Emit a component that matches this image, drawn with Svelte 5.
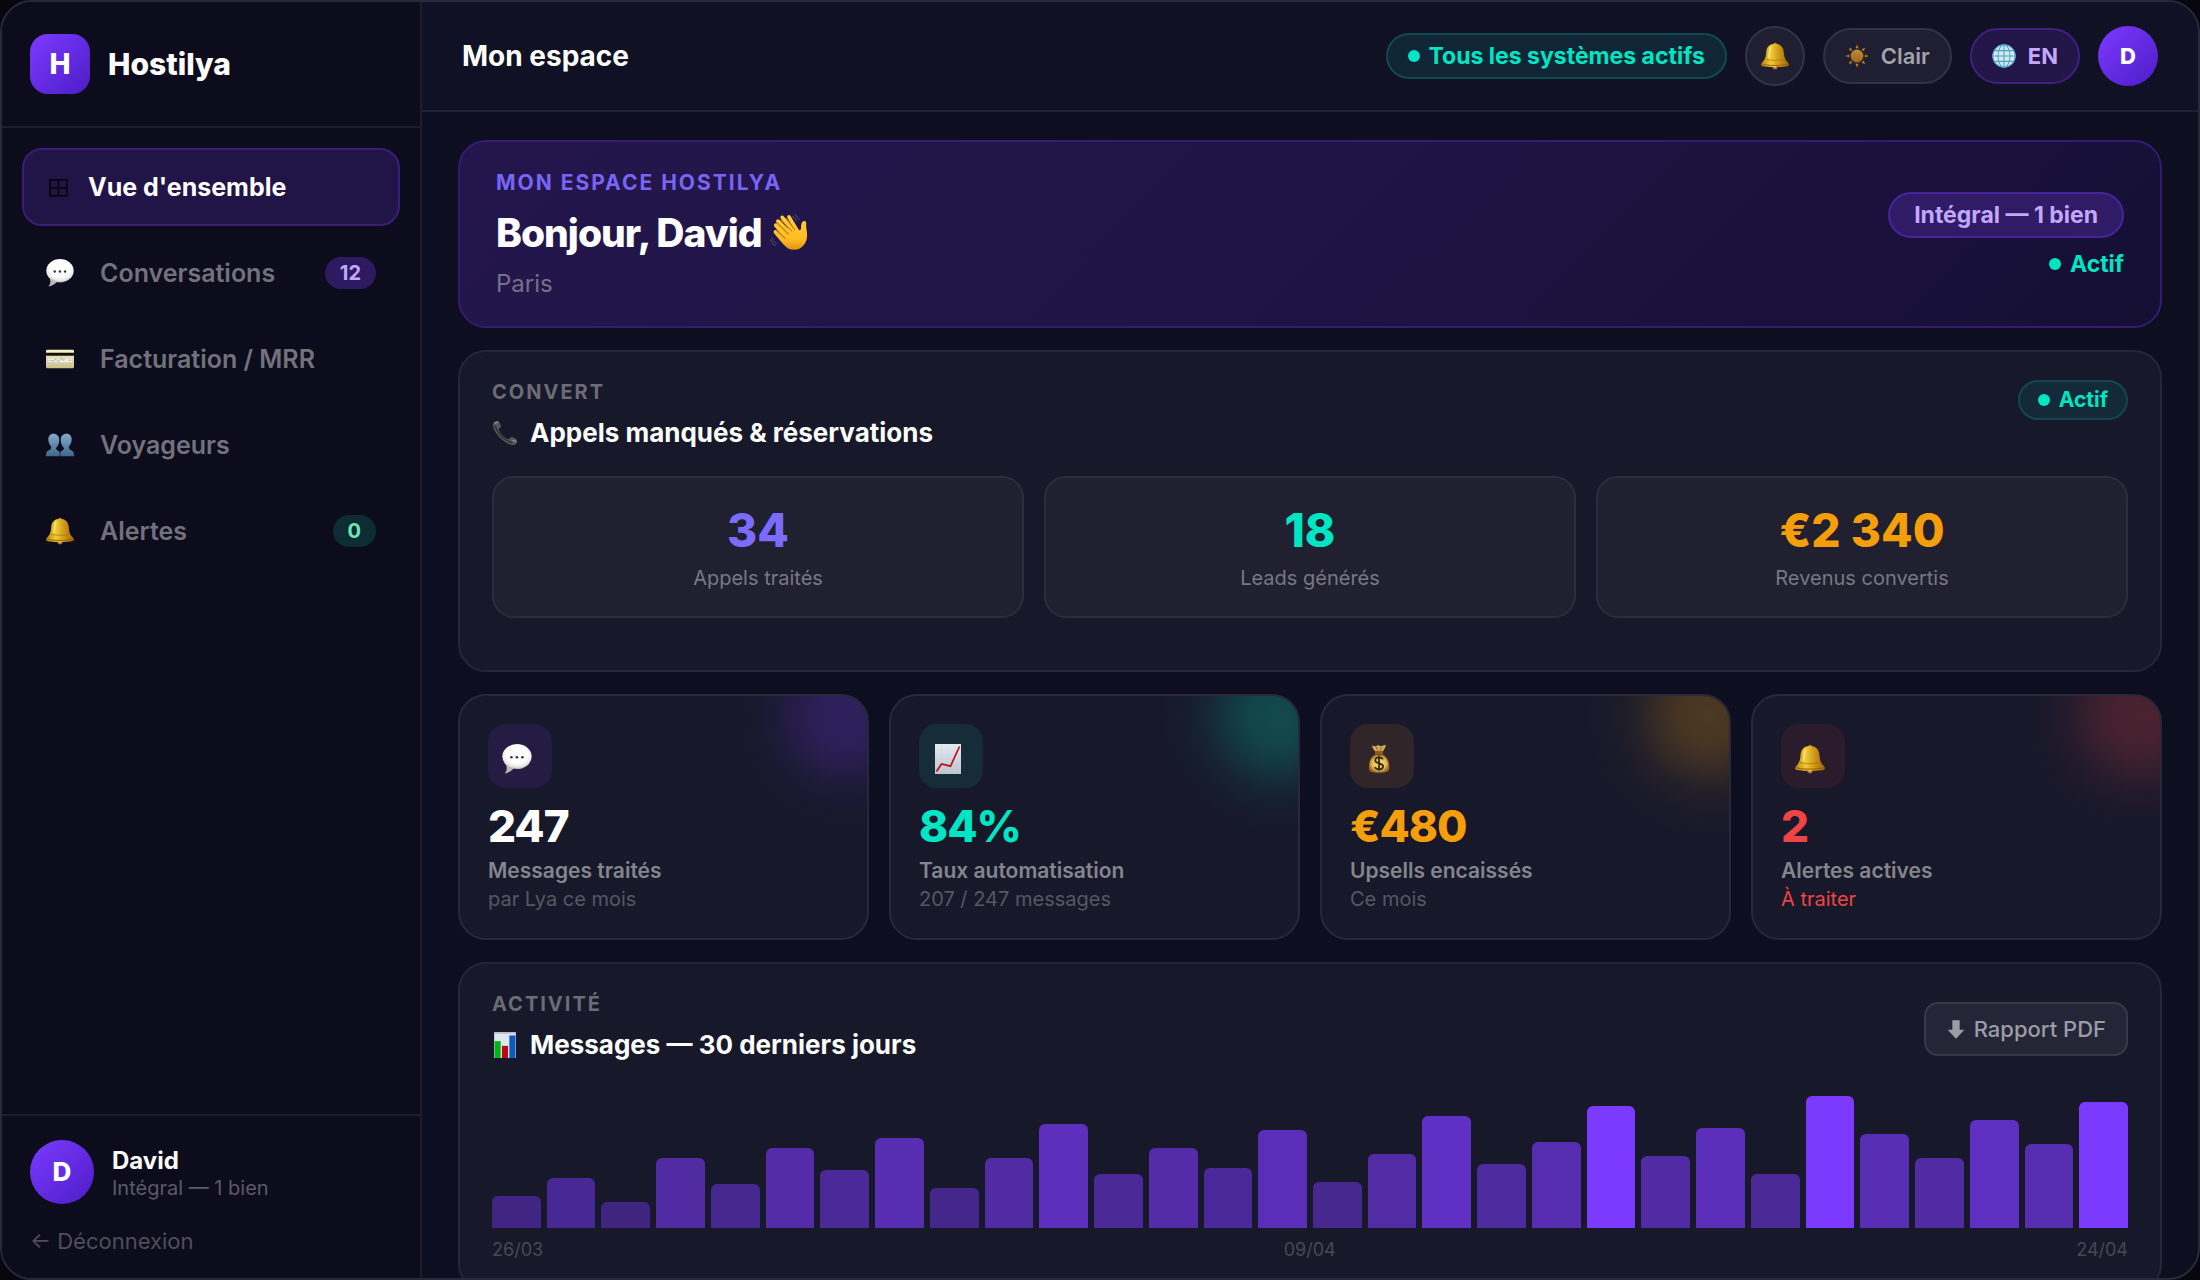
<script lang="ts">
  type Tone = 'violet' | 'mint' | 'amber' | 'red' | 'plain';

  interface NavItem {
    id: string;
    label: string;
    icon: string;
    badge?: string;
    badgeTone?: Tone;
  }

  const nav: NavItem[] = [
    { id: 'overview', label: "Vue d'ensemble", icon: 'grid' },
    { id: 'conversations', label: 'Conversations', icon: 'bubble', badge: '12', badgeTone: 'violet' },
    { id: 'billing', label: 'Facturation / MRR', icon: 'card' },
    { id: 'guests', label: 'Voyageurs', icon: 'people' },
    { id: 'alerts', label: 'Alertes', icon: 'bell', badge: '0', badgeTone: 'mint' },
  ];

  const convert: { value: string; label: string; tone: Tone }[] = [
    { value: '34', label: 'Appels traités', tone: 'violet' },
    { value: '18', label: 'Leads générés', tone: 'mint' },
    { value: '€2 340', label: 'Revenus convertis', tone: 'amber' },
  ];

  const kpis: { icon: string; value: string; label: string; sub: string; tone: Tone }[] = [
    { icon: 'bubble', value: '247', label: 'Messages traités', sub: 'par Lya ce mois', tone: 'violet' },
    { icon: 'trend', value: '84%', label: 'Taux automatisation', sub: '207 / 247 messages', tone: 'mint' },
    { icon: 'money', value: '€480', label: 'Upsells encaissés', sub: 'Ce mois', tone: 'amber' },
    { icon: 'bell', value: '2', label: 'Alertes actives', sub: 'À traiter', tone: 'red' },
  ];

  // Messages per day, 26/03 to 24/04
  const days = [
    32, 50, 26, 70, 44, 80, 58, 90, 40, 70, 104, 54, 80, 60, 98, 46, 74, 112, 64, 86, 122, 72, 100,
    54, 132, 94, 70, 108, 84, 126,
  ];
  const chartMax = 140;
  const peakFrom = 120;

  function barOpacity(n: number) {
    return n >= peakFrom ? 1 : 0.3 + (n / 132) * 0.5;
  }

  let current = $state('overview');
</script>

{#snippet icon(name: string, size: number)}
  <svg class="icon" width={size} height={size} viewBox="0 0 30 30" aria-hidden="true">
    {#if name === 'grid'}
      <path d="M5 6h21v20H5zM15.500 6v20M5 16h21" fill="none" stroke="#000" stroke-width="1.800" />
    {:else if name === 'bubble'}
      <path d="M4 21 C5.500 24.500 4.500 27.500 2.800 29 C3.500 30 9 27.500 12 24.300z" fill="#b9b9b9" />
      <ellipse cx="15" cy="12.600" rx="14.700" ry="12.500" fill="url(#g-bubble)" />
      <circle cx="9.400" cy="13.300" r="1.300" fill="#333" />
      <circle cx="14.900" cy="13.300" r="1.300" fill="#333" />
      <circle cx="20.400" cy="13.300" r="1.300" fill="#333" />
    {:else if name === 'card'}
      <rect x="0" y="5" width="30" height="20" rx="1.500" fill="url(#g-card)" />
      <rect x="0" y="8.300" width="30" height="3.200" fill="#15120c" />
      <rect x="2" y="14.500" width="26" height="4" fill="#efeee0" />
      <path d="M3 17q1.500-1.500 3 0t3-.7t3 .4t3-.8t3 .4l2-.6M24 16.300h3" fill="none" stroke="#8aa3c8" stroke-width="0.800" />
    {:else if name === 'people'}
      <g fill="url(#g-people)">
        <path d="M8 3c-3.700 0-5.700 2.800-5.500 6.500.2 3.500 1.500 5.500 3 7.200.4 2-.5 3.300-2.500 4C1 21.500 0 23 0 27h14.600v-4.500c-1.600-1.400-4-2-4-4.200 2.300-2 3.600-5 3.600-8.600C14.200 5.500 11.700 3 8 3z" />
        <path d="M22 3c3.700 0 5.700 2.800 5.500 6.500-.2 3.500-1.500 5.500-3 7.200-.4 2 .5 3.300 2.500 4 2 .8 3 2.300 3 6.300H15.400v-4.500c1.600-1.400 4-2 4-4.200-2.300-2-3.600-5-3.600-8.600C15.800 5.500 18.300 3 22 3z" />
      </g>
    {:else if name === 'bell'}
      <circle cx="15" cy="2.300" r="1.600" fill="#c58a0c" />
      <circle cx="15" cy="26.400" r="2.800" fill="#b8730d" />
      <path d="M15 2C9.500 2 6 5.300 5.600 10.500 5.200 16 4.600 18.500 1.200 22c-2 2.200-1.300 3.400.8 3.900 4.500 1.100 21.500 1.100 26 0 2.100-.5 2.800-1.700.8-3.900-3.400-3.500-4-6-4.400-11.500C24 5.300 20.500 2 15 2z" fill="url(#g-bell)" />
      <path d="M1 23.600c5 2.100 23 2.100 28 0" fill="none" stroke="#8f5c06" stroke-width="1" />
      <path d="M5 18.500c5 1.600 15 1.600 20 0" fill="none" stroke="#a8730a" stroke-width="0.700" />
      <path d="M10.500 6c-1.800 2.500-1.400 7-2 10.500" fill="none" stroke="#fff3a0" stroke-width="2" stroke-linecap="round" opacity="0.600" />
      <circle cx="15" cy="26.600" r="1.200" fill="#f3b763" />
    {:else if name === 'trend'}
      <rect x="2" y="0" width="26" height="30" fill="url(#g-paper)" />
      <path d="M2 6h26M2 12h26M2 18h26M2 24h26M8.500 0v30M15 0v30M21.500 0v30" stroke="#c8d2db" stroke-width="0.300" />
      <path d="M3.500 27.500 8.500 20l9 2.200L26.500 2.500" fill="none" stroke="#c40d12" stroke-width="1.700" />
    {:else if name === 'money'}
      <path d="M11 10.500C6 14 4.700 19 5 24c.2 4 3 4.700 10 4.700S25 28 25.200 24c.3-5-1-10-6.200-13.500z" fill="url(#g-bag)" />
      <path d="M8 1.500l3.500 1L14 1l2.500 1.300L21.500.8c.8 2.200-1.500 4.500-2.500 6.700h-8C10 5.500 8.200 4 8 1.500z" fill="#d6a856" />
      <path d="M11 7.500h8v2.700h-8z" fill="#8c5a1b" />
      <path d="M12.500 2.800l1 4M17.500 2.800l-1 4" stroke="#8c5a1b" stroke-width="0.800" />
      <path d="M19 15.300c-1-1.500-2.300-1.900-4-1.900-2.300 0-3.800 1.200-3.800 2.900 0 4.100 7.900 1.900 7.900 6 0 1.800-1.600 3-4.100 3-2 0-3.400-.7-4.200-2.200M15 11.600v15.200" fill="none" stroke="#33291a" stroke-width="1.800" />
    {:else if name === 'sun'}
      <circle cx="15" cy="15" r="8" fill="url(#g-sun)" />
      <g fill="#b87a25">
        {#each [0, 45, 90, 135, 180, 225, 270, 315] as a}
          <path d="M13 5.200L15 .5l2 4.700z" transform="rotate({a} 15 15)" />
        {/each}
      </g>
    {:else if name === 'globe'}
      <circle cx="15" cy="15" r="14.300" fill="#d6e7ee" />
      <g fill="none" stroke="#4aa4c8" stroke-width="1.300">
        <circle cx="15" cy="15" r="14" />
        <ellipse cx="15" cy="15" rx="7.500" ry="14" />
        <path d="M15 1v28M1 15h28M3 8.300h24M3 21.700h24" />
      </g>
    {:else if name === 'wave'}
      <path d="M5.200 6.800C4 5.200 6 3.200 7.500 4.600l7.200 7.600-6.200-8.600C7.300 1.900 9.600.2 11 1.900l7.300 9-4.500-8C12.900 1.200 15.200 0 16.300 1.700l6.200 10.400c.8 1.300 2 .6 2-.8-.1-2.500.2-4.800 1.800-5.500 1.400-.6 2.500.4 2.300 2-.3 2.700.6 5.200.7 8.700.2 6.500-4.500 11.700-10 11.800-3.700.1-6.300-1.700-8.800-4.500L3.300 15.300c-1.400-1.600.7-3.500 2.200-2.100l5.300 5.300L3.600 10c-1.300-1.600.3-3.500 1.900-2.500z" fill="url(#g-hand)" />
      <path d="M5.800 7.300l8.700 8.500M8.900 4.900l8.300 8.600M12.700 3.500l6.700 8.600M5.200 13l6.800 6.500" fill="none" stroke="#c9810d" stroke-width="0.900" stroke-linecap="round" />
      <path d="M19.500.6c1.800.8 3 2.200 3.600 4M17.600 1.800c1.800.9 2.700 2 3.300 3.600M1.600 18.500c.5 2 1.700 3.700 3.500 4.700M.3 20.200c.7 2.200 2 3.800 4 4.900" fill="none" stroke="#4b4766" stroke-width="0.800" stroke-linecap="round" />
    {:else if name === 'phone'}
      <path d="M1.500 3.500C3 .8 6.500-.2 8 2l2.200 4c1 2-1.300 3.300-2.500 4.300C9 15.500 14.500 21 19.600 22.400c1-1.200 2.500-3.400 4.400-2.400l4 2.300c2.200 1.500 1 4.900-1.500 6.300C17.500 31.500-1.800 13 1.500 3.500z" fill="#55565a" />
      <path d="M3.500 6.500C5.500 14.500 14.500 24 23.500 26.500" fill="none" stroke="#2b2c30" stroke-width="1.500" />
      <path d="M3.600 3.700l3-1.200M24 23.500l3 1.200" stroke="#8a8b8e" stroke-width="1.500" stroke-linecap="round" />
    {:else if name === 'bars'}
      <rect x="2.500" y="0" width="25" height="30" fill="#dfe7ee" />
      <path d="M2.500 1h25" stroke="#b4a9c4" stroke-width="1.500" />
      <rect x="3" y="10.500" width="7" height="19.500" fill="#00b418" />
      <rect x="11.500" y="16" width="7" height="14" fill="#c00613" />
      <rect x="20" y="4" width="7" height="26" fill="#0b5bbd" />
    {:else if name === 'down'}
      <path d="M9.500 2h11v14h7L15 29.500 2.500 16h7z" fill="currentColor" />
    {/if}
  </svg>
{/snippet}

<!-- shared gradients for the icons -->
<svg class="defs" width="0" height="0" aria-hidden="true">
  <defs>
    <radialGradient id="g-bubble" cx="0.5" cy="0.4" r="0.6">
      <stop offset="0.6" stop-color="#fff" />
      <stop offset="0.88" stop-color="#e4e4e4" />
      <stop offset="1" stop-color="#ababab" />
    </radialGradient>
    <linearGradient id="g-card" x2="0" y2="1">
      <stop offset="0" stop-color="#f7f3cd" />
      <stop offset="1" stop-color="#c9c08b" />
    </linearGradient>
    <linearGradient id="g-people" x2="0" y2="1">
      <stop offset="0" stop-color="#84a9c8" />
      <stop offset="1" stop-color="#3f6890" />
    </linearGradient>
    <linearGradient id="g-bell">
      <stop offset="0" stop-color="#b9800c" />
      <stop offset="0.35" stop-color="#f0cc34" />
      <stop offset="0.65" stop-color="#cf971a" />
      <stop offset="1" stop-color="#a06405" />
    </linearGradient>
    <linearGradient id="g-paper" x2="0" y2="1">
      <stop offset="0" stop-color="#e2ebf3" />
      <stop offset="1" stop-color="#bcc5cd" />
    </linearGradient>
    <radialGradient id="g-bag">
      <stop offset="0" stop-color="#f6dc7c" />
      <stop offset="0.7" stop-color="#e5bd50" />
      <stop offset="1" stop-color="#9c6a20" />
    </radialGradient>
    <linearGradient id="g-sun" x2="0" y2="1">
      <stop offset="0" stop-color="#b98c35" />
      <stop offset="1" stop-color="#a5651a" />
    </linearGradient>
    <linearGradient id="g-hand" x2="0" y2="1">
      <stop offset="0" stop-color="#ffcf3f" />
      <stop offset="0.7" stop-color="#fdbb22" />
      <stop offset="1" stop-color="#e2930c" />
    </linearGradient>
  </defs>
</svg>

<div class="shell">
  <aside class="sidebar">
    <div class="brand">
      <span class="brand__mark">H</span>
      <span class="brand__name">Hostilya</span>
    </div>

    <nav class="nav" aria-label="Navigation">
      {#each nav as item (item.id)}
        <a
          class="nav__item"
          class:nav__item--active={current === item.id}
          href="#{item.id}"
          aria-current={current === item.id ? 'page' : undefined}
          onclick={() => (current = item.id)}
        >
          <span class="nav__icon" class:nav__icon--glyph={item.icon === 'grid'}>
            {@render icon(item.icon, item.icon === 'grid' ? 24 : 28)}
          </span>
          <span class="nav__label">{item.label}</span>
          {#if item.badge}
            <span class="nav__badge nav__badge--{item.badgeTone}">{item.badge}</span>
          {/if}
        </a>
      {/each}
    </nav>

    <div class="account">
      <div class="account__row">
        <span class="avatar avatar--lg">D</span>
        <div class="account__text">
          <div class="account__name">David</div>
          <div class="account__plan">Intégral — 1 bien</div>
        </div>
      </div>
      <button type="button" class="logout">← Déconnexion</button>
    </div>
  </aside>

  <div class="main">
    <header class="topbar">
      <h1>Mon espace</h1>
      <div class="topbar__tools">
        <span class="status"><i class="dot"></i>Tous les systèmes actifs</span>
        <button type="button" class="round" aria-label="Notifications">{@render icon('bell', 28)}</button>
        <button type="button" class="chip">{@render icon('sun', 24)}Clair</button>
        <button type="button" class="chip chip--violet">{@render icon('globe', 24)}EN</button>
        <span class="avatar">D</span>
      </div>
    </header>

    <main class="content">
      <section class="hero">
        <div>
          <p class="hero__eyebrow">MON ESPACE HOSTILYA</p>
          <h2 class="hero__title">Bonjour, David {@render icon('wave', 38)}</h2>
          <p class="hero__city">Paris</p>
        </div>
        <div class="hero__side">
          <span class="plan">Intégral — 1 bien</span>
          <span class="live"><i class="dot"></i>Actif</span>
        </div>
      </section>

      <section class="card">
        <div class="card__head card__head--top">
          <div>
            <p class="eyebrow">CONVERT</p>
            <h3 class="card__title">{@render icon('phone', 26)}Appels manqués &amp; réservations</h3>
          </div>
          <span class="tag"><i class="dot"></i>Actif</span>
        </div>
        <div class="tiles">
          {#each convert as t}
            <div class="tile">
              <div class="tile__value tone--{t.tone}">{t.value}</div>
              <div class="tile__label">{t.label}</div>
            </div>
          {/each}
        </div>
      </section>

      <section class="kpis">
        {#each kpis as k}
          <article class="kpi kpi--{k.tone}">
            <span class="kpi__icon">{@render icon(k.icon, 30)}</span>
            <div class="kpi__value">{k.value}</div>
            <div class="kpi__label">{k.label}</div>
            <div class="kpi__sub">{k.sub}</div>
          </article>
        {/each}
      </section>

      <section class="card card--activity">
        <div class="card__head">
          <div>
            <p class="eyebrow">ACTIVITÉ</p>
            <h3 class="card__title">{@render icon('bars', 26)}Messages — 30 derniers jours</h3>
          </div>
          <button type="button" class="report">{@render icon('down', 20)}Rapport PDF</button>
        </div>
        <div class="chart">
          {#each days as n}
            <div class="chart__bar" style="height: {(n / chartMax) * 100}%; opacity: {barOpacity(n)}"></div>
          {/each}
        </div>
        <div class="chart__axis">
          <span>26/03</span>
          <span>09/04</span>
          <span>24/04</span>
        </div>
      </section>
    </main>
  </div>
</div>

<style>
  :global(body) {
    background: #07070d;
  }

  .shell {
    --violet: #7c3aff;
    --violet-soft: #c4a8ff;
    --mint: #00e5c3;
    --amber: #f59e0b;
    --red: #ef4444;
    display: flex;
    box-sizing: border-box;
    height: 100vh;
    overflow: hidden;
    border: 2px solid #2a2939;
    border-radius: 32px;
    background: #0d0e20;
    color: #fff;
    font-family: Inter, 'Liberation Sans', sans-serif;
    font-size: 22px;
    line-height: 26px;
  }

  .shell :is(h1, h2, h3, p) {
    margin: 0;
  }

  .shell :is(button, a) {
    font: inherit;
    color: inherit;
    text-decoration: none;
    cursor: pointer;
  }

  .shell :is(div, span, button, a, section, aside, header, article) {
    box-sizing: border-box;
  }

  .defs {
    position: absolute;
  }

  .icon {
    display: block;
    flex: none;
  }

  .dot {
    flex: none;
    width: 12px;
    height: 12px;
    border-radius: 50%;
    background: var(--mint);
  }

  /* sidebar */
  .sidebar {
    display: flex;
    flex: none;
    flex-direction: column;
    width: 420px;
    border-right: 2px solid #1e1d2e;
    background: #0d0c1d;
  }

  .brand {
    display: flex;
    align-items: center;
    gap: 18px;
    padding: 32px 28px;
    border-bottom: 2px solid #1e1d2e;
  }

  .brand__mark {
    display: grid;
    place-items: center;
    width: 60px;
    height: 60px;
    border-radius: 18px;
    background: linear-gradient(135deg, #7c3aff, #4c1dc7);
    font-size: 28px;
    font-weight: 800;
  }

  .brand__name {
    font-size: 30px;
    font-weight: 800;
    line-height: 36px;
  }

  .nav {
    display: flex;
    flex: 1;
    flex-direction: column;
    gap: 8px;
    padding: 20px;
  }

  .nav__item {
    display: flex;
    align-items: center;
    gap: 20px;
    height: 78px;
    padding: 0 22px;
    border: 2px solid transparent;
    border-radius: 20px;
  }

  .nav__item--active {
    border-color: #3b1d78;
    background: #211446;
  }

  .nav__icon {
    width: 34px;
  }

  .nav__icon--glyph {
    width: 22px;
  }

  .nav__label {
    flex: 1;
    color: #73727c;
    font-size: 25px;
    font-weight: 600;
    line-height: 28px;
  }

  .nav__item--active .nav__label {
    color: #fff;
    font-weight: 700;
  }

  .nav__badge {
    padding: 3px 15px;
    border-radius: 16px;
    font-size: 20px;
    font-weight: 700;
  }

  .nav__badge--violet {
    background: #2e1a61;
    color: var(--violet-soft);
  }

  .nav__badge--mint {
    background: #0d2c33;
    color: #6ee7b7;
  }

  .account {
    padding: 24px 28px;
    border-top: 2px solid #1e1d2e;
  }

  .account__row {
    display: flex;
    align-items: center;
    gap: 18px;
  }

  .account__text {
    padding-top: 4px;
  }

  .account__name {
    font-size: 24px;
    font-weight: 700;
    line-height: 28px;
  }

  .account__plan {
    color: #5b5a66;
    font-size: 20px;
  }

  .logout {
    margin-top: 24px;
    padding: 0;
    border: 0;
    background: none;
    color: #4f4e5a !important;
  }

  .avatar {
    display: grid;
    flex: none;
    place-items: center;
    width: 60px;
    height: 60px;
    border-radius: 50%;
    background: linear-gradient(135deg, #7c3aff, #4c1dc7);
    font-weight: 800;
  }

  .avatar--lg {
    width: 64px;
    height: 64px;
    font-size: 26px;
  }

  /* topbar */
  .main {
    display: flex;
    flex: 1;
    flex-direction: column;
    min-width: 0;
  }

  .topbar {
    display: flex;
    flex: none;
    align-items: center;
    justify-content: space-between;
    height: 110px;
    padding: 0 40px;
    border-bottom: 2px solid #1f2031;
    background: #101124;
  }

  h1 {
    font-size: 28px;
    font-weight: 700;
    line-height: 34px;
  }

  .topbar__tools {
    display: flex;
    align-items: center;
    gap: 18px;
  }

  .status {
    display: flex;
    align-items: center;
    gap: 9px;
    padding: 8px 20px;
    border: 2px solid #104a50;
    border-radius: 24px;
    background: #102535;
    color: var(--mint);
    font-size: 23px;
    font-weight: 700;
  }

  .round {
    display: grid;
    place-items: center;
    width: 60px;
    height: 60px;
    padding: 0;
    border: 2px solid #343344;
    border-radius: 50%;
    background: #1f1f31;
  }

  .chip {
    display: flex;
    align-items: center;
    gap: 12px;
    height: 56px;
    padding: 0 20px;
    border: 2px solid #343344;
    border-radius: 28px;
    background: #1f1f31;
    color: #a3a3ab !important;
    font-weight: 600 !important;
  }

  .chip--violet {
    border-color: #3f2080;
    background: #221547;
    color: var(--violet-soft) !important;
    font-weight: 700 !important;
  }

  /* content */
  .content {
    display: flex;
    flex: 1;
    flex-direction: column;
    gap: 22px;
    min-height: 0;
    padding: 28px 36px;
    overflow-y: auto;
    scrollbar-width: none;
  }

  .content > section {
    flex: none;
  }

  .hero {
    display: flex;
    align-items: center;
    justify-content: space-between;
    padding: 28px 36px;
    border: 2px solid #351c72;
    border-radius: 28px;
    background: linear-gradient(135deg, #24164d, #1f1444 50%, #150f34);
  }

  .hero__eyebrow {
    color: #7864f5;
    font-size: 21px;
    font-weight: 700;
    letter-spacing: 2px;
  }

  .hero__title {
    display: flex;
    align-items: center;
    gap: 8px;
    margin: 14px 0 !important;
    font-size: 39px;
    font-weight: 800;
    line-height: 46px;
    letter-spacing: -1px;
  }

  .hero__city {
    color: #767089;
    font-size: 24px;
    line-height: 28px;
  }

  .hero__side {
    display: flex;
    flex-direction: column;
    align-items: flex-end;
    gap: 14px;
  }

  .plan {
    padding: 8px 24px;
    border: 2px solid #48239b;
    border-radius: 24px;
    background: #301b66;
    color: var(--violet-soft);
    font-size: 23px;
    font-weight: 700;
  }

  .live,
  .tag {
    display: flex;
    align-items: center;
    gap: 9px;
    color: var(--mint);
    font-size: 23px;
    font-weight: 700;
    line-height: 24px;
  }

  .tag {
    padding: 6px 18px;
    border: 2px solid #13474e;
    border-radius: 20px;
    background: #152a38;
    font-size: 21px;
  }

  .card {
    padding: 28px 32px 52px;
    border: 2px solid #262637;
    border-radius: 28px;
    background: #17182a;
  }

  .card--activity {
    padding-bottom: 28px;
  }

  .card__head {
    display: flex;
    align-items: center;
    justify-content: space-between;
    margin-bottom: 22px;
  }

  .card__head--top {
    align-items: flex-start;
  }

  .eyebrow {
    color: #6c6b76;
    font-size: 20px;
    font-weight: 700;
    line-height: 24px;
    letter-spacing: 2px;
  }

  .card__title {
    display: flex;
    align-items: center;
    gap: 12px;
    margin-top: 8px !important;
    font-size: 26px;
    font-weight: 700;
    line-height: 42px;
  }

  .tiles {
    display: grid;
    grid-template-columns: repeat(3, 1fr);
    gap: 20px;
  }

  .tile {
    padding: 24px;
    border: 2px solid #2c2c3c;
    border-radius: 22px;
    background: #202031;
    text-align: center;
  }

  .tile__value {
    margin-bottom: 6px;
    font-size: 46px;
    font-weight: 800;
    line-height: 56px;
  }

  .tile__label {
    color: #787883;
    font-size: 20px;
    line-height: 28px;
  }

  .tone--violet {
    color: #7c6bff;
  }

  .tone--mint {
    color: var(--mint);
  }

  .tone--amber {
    color: var(--amber);
  }

  .kpis {
    display: grid;
    grid-template-columns: repeat(4, 1fr);
    gap: 20px;
  }

  .kpi {
    padding: 28px;
    border: 2px solid #28283a;
    border-radius: 28px;
    background:
      radial-gradient(
        circle 124px at calc(100% - 20px) 20px,
        rgb(var(--glow) / 0.24),
        rgb(var(--glow) / 0.22) 22%,
        rgb(var(--glow) / 0.14) 42%,
        rgb(var(--glow) / 0.06) 60%,
        rgb(var(--glow) / 0.02) 78%,
        transparent
      ),
      #17182a;
  }

  .kpi--violet {
    --glow: 124 58 255;
    --kpi-color: #fff;
    --kpi-tint: #251c44;
  }

  .kpi--mint {
    --glow: 0 229 195;
    --kpi-color: var(--mint);
    --kpi-tint: #162c39;
  }

  .kpi--amber {
    --glow: 245 158 11;
    --kpi-color: var(--amber);
    --kpi-tint: #302629;
  }

  .kpi--red {
    --glow: 239 68 68;
    --kpi-color: var(--red);
    --kpi-tint: #2a1b2d;
  }

  .kpi__icon {
    display: flex;
    align-items: center;
    width: 64px;
    height: 64px;
    padding: 6px 14px 0;
    border-radius: 18px;
    background: var(--kpi-tint);
  }

  .kpi__value {
    margin: 12px 0 6px;
    color: var(--kpi-color);
    font-size: 44px;
    font-weight: 800;
    line-height: 52px;
    letter-spacing: -1px;
  }

  .kpi__label {
    color: #85858e;
    font-size: 21px;
    font-weight: 600;
  }

  .kpi__sub {
    margin-top: 4px;
    color: #575763;
    font-size: 20px;
    line-height: 22px;
  }

  .kpi--red .kpi__sub {
    color: var(--red);
  }

  .report {
    display: flex;
    align-items: center;
    gap: 8px;
    height: 54px;
    padding: 0 20px;
    border: 2px solid #393847;
    border-radius: 14px;
    background: #242536;
    color: #9c9ca5 !important;
    font-weight: 500 !important;
  }

  .chart {
    display: flex;
    align-items: flex-end;
    gap: 6px;
    height: 140px;
  }

  .chart__bar {
    flex: 1;
    border-radius: 6px 6px 0 0;
    background: var(--violet);
  }

  .chart__axis {
    display: flex;
    justify-content: space-between;
    margin-top: 10px;
    color: #484855;
    font-size: 18px;
    line-height: 24px;
  }
</style>
